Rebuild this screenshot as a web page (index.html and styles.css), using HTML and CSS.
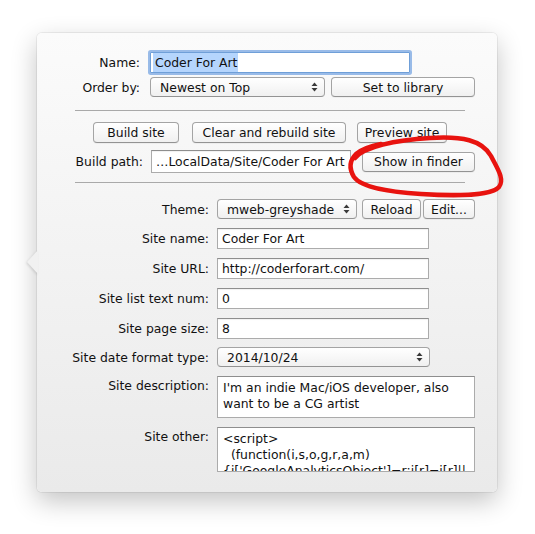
FILE: index.html
```html
<!DOCTYPE html>
<html>
<head>
<meta charset="utf-8">
<link rel="stylesheet" href="styles.css">
</head>
<body>
<div class="popover">
  <svg class="arrow" width="11" height="24" viewBox="0 0 11 24"><polygon points="11,0 0,12 11,24" fill="#f1f1f1"/></svg>

  <div class="row r-name">
    <span class="lbl lbl-top">Name:</span>
    <div class="field focus w-name"><span class="sel">Coder For Art</span></div>
  </div>
  <div class="row r-order">
    <span class="lbl lbl-top">Order by:</span>
    <div class="popup w-order"><span class="ptxt">Newest on Top</span><svg class="ud" width="7" height="10" viewBox="0 0 7 10"><polygon points="0.5,4 3.5,0.5 6.5,4"/><polygon points="0.5,6 3.5,9.5 6.5,6"/></svg></div>
    <div class="btn w-lib">Set to library</div>
  </div>
  <div class="sep s1"></div>
  <div class="row r-build">
    <div class="btn w-build">Build site</div>
    <div class="btn w-clear">Clear and rebuild site</div>
    <div class="btn w-preview">Preview site</div>
  </div>
  <div class="row r-path">
    <span class="lbl lbl-path">Build path:</span>
    <div class="field w-path">…LocalData/Site/Coder For Art</div>
    <div class="btn w-finder">Show in finder</div>
  </div>
  <div class="sep s2"></div>

  <div class="row r-theme">
    <span class="lbl lbl-bot">Theme:</span>
    <div class="popup w-theme"><span class="ptxt">mweb-greyshade</span><svg class="ud" width="7" height="10" viewBox="0 0 7 10"><polygon points="0.5,4 3.5,0.5 6.5,4"/><polygon points="0.5,6 3.5,9.5 6.5,6"/></svg></div>
    <div class="btn w-reload">Reload</div>
    <div class="btn w-edit">Edit...</div>
  </div>
  <div class="row r-f">
    <span class="lbl lbl-bot">Site name:</span>
    <div class="field w-text">Coder For Art</div>
  </div>
  <div class="row r-f">
    <span class="lbl lbl-bot">Site URL:</span>
    <div class="field w-text">http://coderforart.com/</div>
  </div>
  <div class="row r-f">
    <span class="lbl lbl-bot">Site list text num:</span>
    <div class="field w-text">0</div>
  </div>
  <div class="row r-f">
    <span class="lbl lbl-bot">Site page size:</span>
    <div class="field w-text">8</div>
  </div>
  <div class="row r-date">
    <span class="lbl lbl-bot">Site date format type:</span>
    <div class="popup w-date"><span class="ptxt">2014/10/24</span><svg class="ud" width="7" height="10" viewBox="0 0 7 10"><polygon points="0.5,4 3.5,0.5 6.5,4"/><polygon points="0.5,6 3.5,9.5 6.5,6"/></svg></div>
  </div>
  <div class="row r-area r-desc">
    <span class="lbl lbl-bot lbl-area">Site description:</span>
    <div class="area w-area h-desc">I'm an indie Mac/iOS developer, also
want to be a CG artist</div>
  </div>
  <div class="row r-area r-other">
    <span class="lbl lbl-bot lbl-area">Site other:</span>
    <div class="area w-area h-other">&lt;script&gt;
  (function(i,s,o,g,r,a,m)
{i['GoogleAnalyticsObject']=r;i[r]=i[r]||</div>
  </div>
</div>

<svg class="mark" width="535" height="534" viewBox="0 0 535 534">
  <path d="M355 158 C364 147 395 140 430 138 C462 136 482 140 491 156 C497 168 505 179 499 187 C491 196 452 196 421 194 C390 192 362 188 354 177 C348 167 350 160 356 154 C362 149 371 146 381 144" fill="none" stroke="#e8130f" stroke-width="4.5" stroke-linecap="round" stroke-linejoin="round"/>
</svg>
</body>
</html>
```

FILE: styles.css
```css
html, body {
  margin: 0;
  padding: 0;
  background: #ffffff;
}

body {
  position: relative;
  font-family: "DejaVu Sans", "Liberation Sans", sans-serif;
  font-size: 12.4px;
  color: #111;
  width: 535px;
  height: 534px;
  overflow: hidden;
}

.popover {
  position: relative;
  margin: 33px 0 0 37px;
  width: 460px;
  height: 459px;
  box-sizing: border-box;
  padding-top: 19px;
  border-radius: 5px;
  background: linear-gradient(#fbfbfb, #eaeaea);
  box-shadow: 0 0 0 1px rgba(0, 0, 0, 0.06), 0 9px 26px rgba(0, 0, 0, 0.24);
}

.arrow {
  position: absolute;
  left: -10px;
  top: 217px;
  filter: drop-shadow(-1px 1px 1px rgba(0, 0, 0, 0.12));
}

.row {
  display: flex;
  align-items: center;
}

.lbl {
  flex: none;
  text-align: right;
  white-space: nowrap;
}

.lbl-top { width: 103px; margin-right: 10px; }
.lbl-path { width: 106px; margin-right: 8px; }
.lbl-bot { width: 172px; margin-right: 8px; }

/* text fields */
.field {
  box-sizing: border-box;
  height: 21px;
  background: #fff;
  border: 1px solid #ababab;
  border-top-color: #8e8e8e;
  box-shadow: inset 0 1px 1px rgba(0, 0, 0, 0.06);
  padding: 0 4px;
  display: flex;
  align-items: center;
  white-space: nowrap;
  overflow: hidden;
  flex: none;
}

.focus {
  border-color: #6f9fd8;
  box-shadow: 0 0 0 2px rgba(120, 165, 225, 0.75);
  border-radius: 1px;
  padding-left: 2px;
}

.sel {
  background: #b5d5fd;
  padding: 2px 1px 2px 2px;
}

.w-name { width: 260px; }
.w-path { width: 200px; height: 23px; padding-left: 4px; }
.w-text { width: 212px; }

/* buttons */
.btn {
  box-sizing: border-box;
  height: 20px;
  border: 1px solid #a4a4a4;
  border-bottom-color: #939393;
  border-radius: 4px;
  background: linear-gradient(#ffffff, #f0f0f0);
  box-shadow: 0 1px 0 rgba(0, 0, 0, 0.04);
  display: flex;
  align-items: center;
  justify-content: center;
  white-space: nowrap;
  flex: none;
}

.w-lib { width: 144px; margin-left: 6px; }
.w-build { width: 86px; height: 21px; }
.w-clear { width: 154px; height: 21px; margin-left: 13px; }
.w-preview { width: 90px; height: 21px; margin-left: 11px; }
.w-finder { width: 113px; margin-left: 11px; }
.w-reload { width: 59px; margin-left: 5px; }
.w-edit { width: 52px; margin-left: 2px; }

/* popup buttons */
.popup {
  box-sizing: border-box;
  height: 20px;
  border: 1px solid #a4a4a4;
  border-bottom-color: #939393;
  border-radius: 4px;
  background: linear-gradient(#ffffff, #f0f0f0);
  display: flex;
  align-items: center;
  justify-content: space-between;
  padding: 0 6px 0 9px;
  flex: none;
  white-space: nowrap;
}

.ud { fill: #3a3a3a; flex: none; }

.w-order { width: 175px; }
.w-theme { width: 140px; }
.w-date { width: 213px; }

/* separators */
.sep {
  height: 1px;
  width: 390px;
  margin-left: 38px;
  background: #a9a9a9;
}

.s1 { margin-top: 13px; }
.s2 { margin-top: 9px; }

/* rows vertical rhythm */
.r-name { height: 21px; }
.r-order { height: 20px; margin-top: 4px; }
.r-build { height: 21px; margin-top: 11px; margin-left: 56px; }
.r-path { height: 23px; margin-top: 7px; }
.r-theme { height: 20px; margin-top: 16px; }
.r-f { height: 21px; margin-top: 9px; }
.r-date { height: 20px; margin-top: 8px; }
.r-area { align-items: flex-start; margin-top: 9px; }

.lbl-area { padding-top: 2px; }

.area {
  box-sizing: border-box;
  background: #fff;
  border: 1px solid #ababab;
  border-top-color: #8e8e8e;
  padding: 3px 5px 0 5px;
  line-height: 16px;
  white-space: pre;
  overflow: hidden;
  flex: none;
}

.w-area { width: 258px; }
.h-desc { height: 42px; }
.h-other { height: 45px; }

.mark {
  position: absolute;
  left: 0;
  top: 0;
  pointer-events: none;
}
```
